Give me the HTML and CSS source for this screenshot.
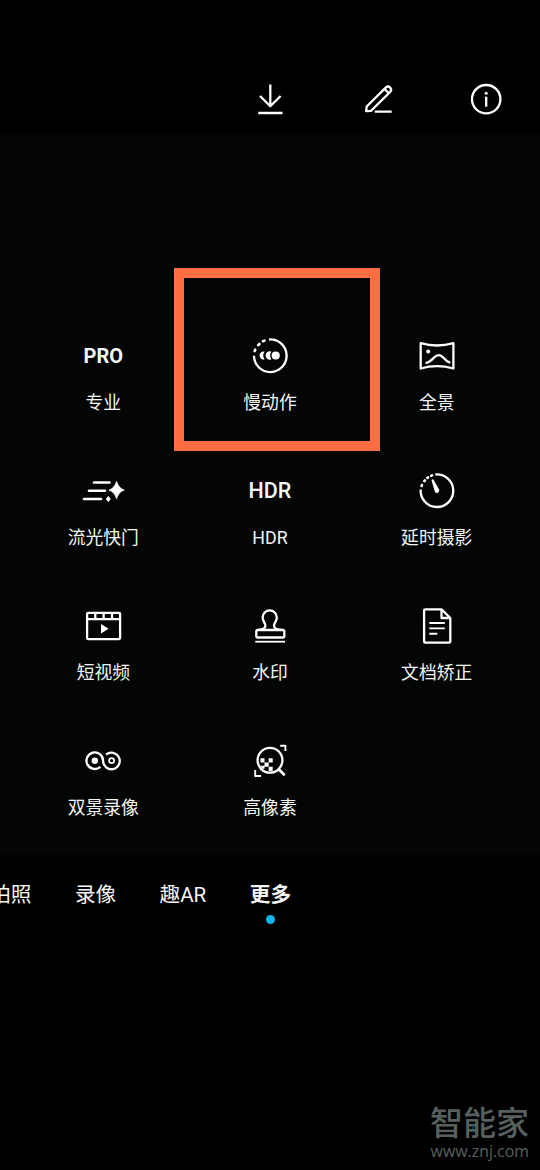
FILE: index.html
```html
<!DOCTYPE html>
<html lang="zh-CN">
<head>
<meta charset="utf-8">
<title>更多</title>
<link rel="stylesheet" href="styles.css">
</head>
<body>
<div class="screen">
  <header class="toolbar">
    <svg class="icon" viewBox="0 0 48 48"><path d="M24.3 8.500v21.300M14 20l10.300 10.300L34.600 20M12.300 37h24.200"/></svg>
    <svg class="icon" viewBox="0 0 48 48"><path d="M12.200 35.200l.5-4.700L32 11.400a3.050 3.050 0 0 1 4.300 4.300L17 34.900zM30.800 13.300l3.500 3.500M20.700 35.700h17"/></svg>
    <svg class="icon" viewBox="0 0 48 48"><circle cx="24.200" cy="23.200" r="14.200"/><path d="M24.200 20.700v10"/><circle class="fill" cx="24.200" cy="17.300" r="1.500"/></svg>
  </header>

  <main class="modes">
    <div class="mode"><span class="word">PRO</span><span class="label">专业</span></div>
    <div class="mode selected">
      <svg class="icon" viewBox="0 0 48 48"><path d="M23 7.500A16.300 16.300 0 1 1 8 23.800"/><path class="round" d="M8.700 19.100l.5-1.400M12.200 13.200l1.200-1.200M17 9.200l1.500-.6"/><circle class="fill" cx="29.700" cy="23.500" r="4.100"/><path class="fill" d="M25.300 19.600a4.200 4.200 0 1 0 0 7.800a7.500 7.500 0 0 1 0-7.800zM18.600 19.500a4.100 4.100 0 1 0 0 8a7.500 7.500 0 0 1 0-8z"/></svg>
      <span class="label">慢动作</span>
    </div>
    <div class="mode">
      <svg class="icon" viewBox="0 0 48 48"><path d="M7.700 11.200q16.300 4.600 32.700 0v25.300q-16.400-4.600-32.700 0z"/><circle class="fill" cx="15.200" cy="19.600" r="2"/><path d="M12.600 31.200c4-.8 6-3.400 8.700-5.900 3-2.900 5.700-2.900 8.500-.2 2.400 2.400 4.200 5.200 7.500 5.500"/></svg>
      <span class="label">全景</span>
    </div>
    <div class="mode">
      <svg class="icon" viewBox="0 0 48 48"><path class="round" d="M15 15.500h15.500M10 23.800h16M5 32h17"/><path class="fill" d="M37.600 14.300q1.900 6.700 7.700 8.800-5.800 2.100-7.700 8.800-1.900-6.700-7.700-8.800 5.800-2.100 7.700-8.800zM29.300 29.300l2.200 2.700-2.200 2.700-2.200-2.700z" style="stroke:#fff;stroke-width:.6"/></svg>
      <span class="label">流光快门</span>
    </div>
    <div class="mode"><span class="word word-hdr">HDR</span><span class="label">HDR</span></div>
    <div class="mode">
      <svg class="icon" viewBox="0 0 48 48"><path d="M22.300 7.500A16.300 16.300 0 1 1 7.700 22.500"/><path class="round" d="M8.600 19l.3-.9M11.300 14.100l.6-.7M14.400 10.900l.7-.5M18.300 8.700l.8-.3"/><path class="fill" d="M18.600 13.500a1 1 0 0 1 2-.5l5.500 9.600a2.300 2.300 0 1 1-4.300 1.800z"/></svg>
      <span class="label">延时摄影</span>
    </div>
    <div class="mode">
      <svg class="icon" viewBox="0 0 48 48"><rect x="8.100" y="10.800" width="33" height="26.300" rx="1"/><path d="M8 17.200h33M16.300 11v6M24.600 11v6M33 11v6"/><path class="fill" d="M22 22l7.600 4.800L22 31.600z"/></svg>
      <span class="label">短视频</span>
    </div>
    <div class="mode">
      <svg class="icon" viewBox="0 0 48 48"><path d="M12 27.800q7.500 0 7.500-4.300c0-2.400-2.800-4.400-2.800-8a7.100 7.100 0 0 1 14.200 0c0 3.600-2.800 5.600-2.800 8q0 4.300 7.500 4.300" transform="translate(-.1 0)"/><rect x="10.300" y="28" width="28" height="7.500" rx="1.500"/><path d="M9.300 39.700H39" stroke-width="1.800"/></svg>
      <span class="label">水印</span>
    </div>
    <div class="mode">
      <svg class="icon" viewBox="0 0 48 48"><path d="M28.500 7.300H12.300a1.200 1.200 0 0 0-1.200 1.200v31a1.200 1.200 0 0 0 1.200 1.200h23.800a1.200 1.200 0 0 0 1.200-1.200V16zM28.500 7.300V16h8.800"/><path class="thin" d="M16.300 21h15.500M16.300 26.400h15.500M16.300 31.800h8"/></svg>
      <span class="label">文档矫正</span>
    </div>
    <div class="mode">
      <svg class="icon" viewBox="0 0 48 48"><path d="M21.400 29.800A8.300 8.300 0 1 1 24.100 23.700A8.300 8.300 0 1 0 27 17.600"/><circle class="fill" cx="15.800" cy="23.700" r="3.200"/><circle cx="32.600" cy="23.700" r="2.500" stroke-width="1.800"/></svg>
      <span class="label">双景录像</span>
    </div>
    <div class="mode">
      <svg class="icon" viewBox="0 0 48 48"><circle cx="24" cy="23.300" r="12.400"/><path class="handle" d="M32.500 32l6.200 6.300"/><path class="thin" d="M34.200 8.800h5.200V14M9.200 33v6h5.800"/><path class="fill" d="M14.500 21.300h4v4.300h4.200v-4.300h4v4.300h-4v4.200h4v4.200h-4v-4.200h-4.200v2h-2l-2-3h4v-3.200h-4z"/></svg>
      <span class="label">高像素</span>
    </div>
  </main>

  <nav class="tabs">
    <span class="tab">拍照</span>
    <span class="tab">录像</span>
    <span class="tab">趣AR</span>
    <span class="tab active">更多</span>
  </nav>

  <footer class="brand">
    <span class="brand-name">智能家</span>
    <span class="brand-url">www.znj.com</span>
  </footer>
</div>
</body>
</html>
```
FILE: styles.css
```css
*, *::before, *::after { box-sizing: border-box; }

body {
  margin: 0;
  background: #000;
  color: #f4f6f5;
  font-family: Roboto, "Noto Sans CJK SC", sans-serif;
}

.screen {
  display: flex;
  flex-direction: column;
  width: 540px;
  height: 1170px;
  overflow: hidden;
}

.toolbar {
  display: flex;
  justify-content: flex-end;
  gap: 60px;
  height: 135px;
  padding: 76px 30px 0 0;
}

.icon {
  display: block;
  flex: none;
  width: 48px;
  height: 48px;
  fill: none;
  stroke: #fff;
  stroke-width: 2.3;
  stroke-linejoin: round;
}

.icon .fill { fill: #fff; stroke: none; }
.icon .round { stroke-linecap: round; stroke-width: 2.6; }
.icon .thin { stroke-width: 1.9; }
.icon .handle { stroke-width: 2.7; }

.modes {
  display: grid;
  grid-template-columns: repeat(3, 1fr);
  grid-auto-rows: 135px;
  height: 720px;
  padding: 197px 20px 0;
  background: #030604;
}

.mode {
  position: relative;
  display: flex;
  flex-direction: column;
  align-items: center;
  gap: 11px;
}

.selected::after {
  content: "";
  position: absolute;
  top: -64px;
  left: -13px;
  width: 206px;
  height: 183px;
  border: 10px solid #ff6e40;
}

.word {
  height: 48px;
  font-size: 20px;
  font-weight: 700;
  line-height: 48px;
}

.word-hdr { font-size: 21.5px; font-weight: 500; }

.label {
  font-size: 17.8px;
  line-height: 24px;
  white-space: nowrap;
}

.tabs {
  display: flex;
  justify-content: flex-end;
  gap: 43.5px;
  height: 80px;
  padding: 25px 249px 0 0;
}

.tab {
  flex: none;
  font-size: 20.6px;
  line-height: 30px;
  white-space: nowrap;
}

.active {
  display: flex;
  flex-direction: column;
  align-items: center;
  font-weight: 700;
}

.active::after {
  content: "";
  width: 9px;
  height: 9px;
  margin-top: 5px;
  border-radius: 50%;
  background: #15b4e6;
}

.brand {
  display: flex;
  flex-direction: column;
  align-items: flex-end;
  margin-top: auto;
  padding: 0 11px 9px 0;
  color: #56605e;
}

.brand-name {
  position: relative;
  font-size: 33px;
  font-weight: 500;
  line-height: 35px;
}

/* small teal accent inside the middle character */
.brand-name::after {
  content: "Z";
  position: absolute;
  left: 40px;
  top: 19px;
  color: #0d5f68;
  font-size: 9px;
  font-weight: 400;
  line-height: 9px;
}

.brand-url {
  font-family: "Open Sans", sans-serif;
  font-size: 15.9px;
  line-height: 20px;
}
```
